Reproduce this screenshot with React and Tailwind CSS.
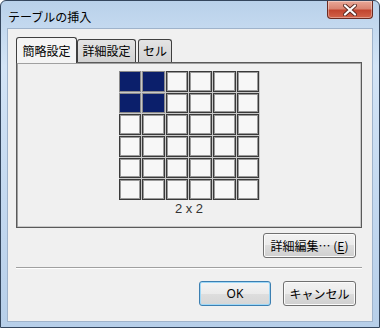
const jp = { fontFamily: '"Noto Sans CJK JP", "Noto Sans", sans-serif' }

// 6x6 picker, top-left 2x2 selected
const ROWS = 6
const COLS = 6
const SEL_R = 2
const SEL_C = 2

function CloseButton() {
  return (
    <div className="mr-[6px] flex h-[18px] w-[46px] items-center justify-center rounded-b-[4px] border border-t-0 border-[#6b2b22] bg-[linear-gradient(#e9a898_0%,#d98572_45%,#c2452f_55%,#d2634a_100%)] shadow-[inset_0_0_0_1px_rgba(255,255,255,0.35)]">
      <svg width="14" height="12" viewBox="0 0 14 12">
        <path d="M2 1.5 L12 10.5 M12 1.5 L2 10.5" stroke="#5a2a22" strokeWidth="4" strokeLinecap="round" />
        <path d="M2 1.5 L12 10.5 M12 1.5 L2 10.5" stroke="#ffffff" strokeWidth="2.2" strokeLinecap="round" />
      </svg>
    </div>
  )
}

function Tab({ label, selected, width }) {
  if (selected) {
    return (
      <div className={'relative z-10 -mb-px flex h-[26px] items-center justify-center rounded-t-[3px] border border-b-0 border-[#3f3f3f] bg-[#f4f4f4] text-[12px] text-black ' + width}>
        {label}
      </div>
    )
  }
  return (
    <div className={'flex h-[23px] items-center justify-center rounded-t-[3px] border border-b-0 border-[#3f3f3f] bg-[linear-gradient(#e4e4e4,#d2d2d2)] text-[12px] text-black ' + width}>
      {label}
    </div>
  )
}

function Button({ children, primary, className = '' }) {
  return (
    <div
      className={
        'flex h-[25px] items-center justify-center rounded-[3px] border text-[12px] text-black ' +
        (primary
          ? 'border-[#3c7fb1] bg-[linear-gradient(#f4f4f4_0%,#ebebeb_50%,#dedede_50%,#d6d6d6_100%)] shadow-[inset_0_0_0_1px_#9fd8f7] '
          : 'border-[#707070] bg-[linear-gradient(#f2f2f2_0%,#ebebeb_50%,#dddddd_50%,#cfcfcf_100%)] shadow-[inset_0_0_0_1px_#fbfbfb] ') +
        className
      }
    >
      {children}
    </div>
  )
}

export default function App() {
  return (
    <div
      className="flex h-[328px] w-[380px] flex-col rounded-t-[6px] border border-[#34465d] bg-[linear-gradient(#b9d1ea_0%,#d3e4f6_20%,#c4d9f0_60%,#b7cfe9_100%)]"
      style={jp}
    >
      {/* title bar */}
      <div className="flex h-[27px] shrink-0 items-start justify-between">
        <div className="pl-[7px] pt-[7px] text-[12px] leading-[17px] text-black">テーブルの挿入</div>
        <CloseButton />
      </div>

      {/* client area */}
      <div className="mx-[6px] h-[294px] border border-[#9fb3cb] bg-[#f0f0f0] pl-[8px] pr-[10px] pt-[8px]">
        <div className="flex h-[25px] items-end">
          <Tab label="簡略設定" selected width="w-[61px]" />
          <Tab label="詳細設定" width="w-[59px]" />
          <div className="w-[2px]" />
          <Tab label="セル" width="w-[34px]" />
        </div>

        <div className="flex h-[166px] flex-col items-center border border-[#5a5a5a] pt-[8px] shadow-[inset_1px_1px_0_#a0a0a0,inset_-1px_-1px_0_#c8c8c8]">
          <div className="grid h-[129px] w-[141px] grid-cols-6 grid-rows-6 gap-px bg-[#c9c9c9]">
            {Array.from({ length: ROWS * COLS }).map((_, i) => {
              const r = Math.floor(i / COLS)
              const c = i % COLS
              const on = r < SEL_R && c < SEL_C
              return (
                <div
                  key={i}
                  className={
                    on
                      ? 'border border-[#8a8a8a] bg-[#0b1f6b]'
                      : 'border border-[#3a3a3a] bg-[#f7f7f7] shadow-[inset_0_0_0_1px_#9a9a9a]'
                  }
                />
              )
            })}
          </div>
          <div className="mt-[2px] text-[13px] leading-[14px] text-[#333]" style={{ fontFamily: '"Liberation Sans", sans-serif' }}>
            2 x 2
          </div>
        </div>

        <div className="mt-[5px] flex justify-end pr-[6px]">
          <Button className="w-[93px]">
            詳細編集…&nbsp;(<span className="underline underline-offset-2">E</span>)
          </Button>
        </div>

        <div className="mt-[9px] border-t border-b border-t-[#a0a0a0] border-b-white" />

        <div className="mt-[12px] flex justify-end gap-[12px] pr-[6px]">
          <Button primary className="w-[72px]">
            <span style={{ fontFamily: '"Noto Sans", sans-serif' }}>OK</span>
          </Button>
          <Button className="w-[73px]">キャンセル</Button>
        </div>
      </div>
    </div>
  )
}
